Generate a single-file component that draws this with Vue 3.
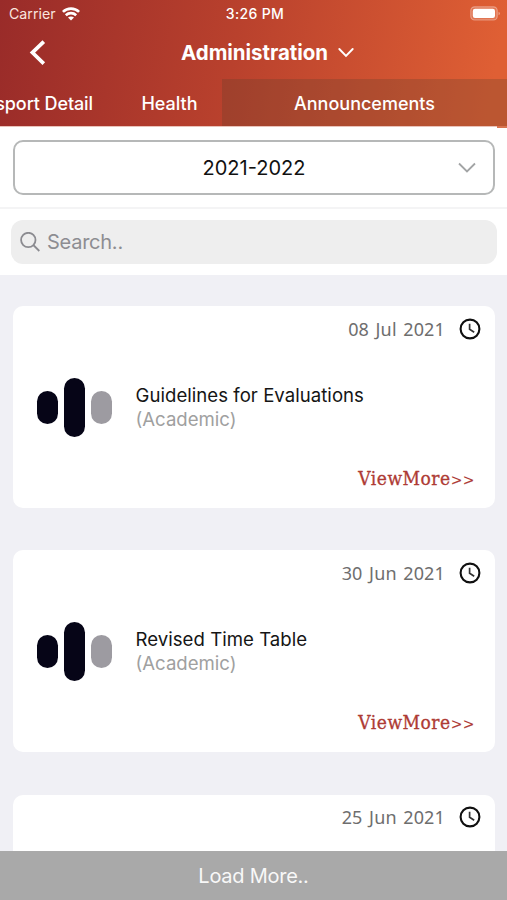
<script setup>
const announcements = [
  { date: '08 Jul 2021', title: 'Guidelines for Evaluations', category: '(Academic)' },
  { date: '30 Jun 2021', title: 'Revised Time Table', category: '(Academic)' },
  { date: '25 Jun 2021', title: '', category: '' },
]
</script>

<template>
  <div class="screen">
    <header class="header">
      <div class="status">
        <div class="carrier">
          <span>Carrier</span>
          <svg width="18" height="14" viewBox="0 0 18 14" fill="none" stroke="#fff" stroke-width="2.7">
            <path d="M.9 4.9C5.4.5 12.6.5 17.1 4.9" />
            <path d="M3.8 8.2C6.8 5.5 11.2 5.5 14.2 8.2" />
            <path d="M6 10.5C7.7 9.1 10.3 9.1 12 10.5L9 13.5Z" fill="#fff" stroke="none" />
          </svg>
        </div>
        <span class="clock">3:26 PM</span>
        <svg class="battery" width="31" height="15" viewBox="0 0 31 15">
          <rect x=".8" y=".8" width="26.4" height="13.2" rx="3.8" fill="#fff" fill-opacity=".15" stroke="#fff" stroke-opacity=".35" stroke-width="1.2" />
          <rect x="2.8" y="2.8" width="22.2" height="9.2" rx="2.2" fill="#fff" />
          <path d="M28.6 5.7c1.6.7 1.6 2.9 0 3.6z" fill="#fff" fill-opacity=".5" />
        </svg>
      </div>
      <div class="titlebar">
        <svg class="back" width="18" height="26" viewBox="0 0 18 26" fill="none" stroke="#fff" stroke-width="3.7">
          <path d="M15.8 1.6 4.4 12.6l11.4 11" />
        </svg>
        <h1>Administration</h1>
        <svg class="title-arrow" width="18" height="12" viewBox="0 0 18 12" fill="none" stroke="#fff" stroke-width="1.9" stroke-linecap="round">
          <path d="m2.3 2 6.7 7 6.7-7" />
        </svg>
      </div>
      <nav class="tabs">
        <div class="tab transport"><span>Transport Detail</span></div>
        <div class="tab health"><span>Health</span></div>
        <div class="tab active"><span>Announcements</span></div>
      </nav>
    </header>

    <section class="year">
      <div class="select">
        <span>2021-2022</span>
        <svg width="20" height="12" viewBox="0 0 20 12" fill="none" stroke="#a2a4a5" stroke-width="1.8">
          <path d="m2 1.5 8 8 8-8" />
        </svg>
      </div>
    </section>

    <section class="search">
      <div class="field">
        <svg width="21" height="21" viewBox="0 0 21 21" fill="none" stroke="#8b8b90" stroke-width="1.8">
          <circle cx="8.3" cy="8" r="7.2" />
          <path d="m13.3 13 6 6" />
        </svg>
        <span>Search..</span>
      </div>
    </section>

    <main class="list">
      <article v-for="item in announcements" :key="item.date" class="card">
        <div class="date">
          <span>{{ item.date }}</span>
          <svg width="22" height="22" viewBox="0 0 22 22" fill="none" stroke="#101010" stroke-width="2.1">
            <circle cx="11" cy="11" r="9.4" />
            <path d="M10.6 5.8v5.4l4.6 3" stroke="#333" stroke-width="1.7" />
          </svg>
        </div>
        <template v-if="item.title">
          <div class="content">
            <div class="bars"><i class="bar"></i><i class="bar tall"></i><i class="bar pale"></i></div>
            <div class="copy">
              <div class="name">{{ item.title }}</div>
              <div class="category">{{ item.category }}</div>
            </div>
          </div>
          <div class="more">ViewMore<span class="arrows">&gt;&gt;</span></div>
        </template>
      </article>
    </main>

    <footer class="load">Load More..</footer>
  </div>
</template>

<style>
html, body { margin: 0; overflow: hidden; }
</style>

<style scoped>
* { box-sizing: border-box; }
svg { display: block; flex: none; }
.screen {
  width: 507px;
  height: 900px;
  display: flex;
  flex-direction: column;
  overflow: hidden;
  background: #f0f0f5;
  font-family: Inter, "Liberation Sans", sans-serif;
  white-space: nowrap;
}
.header {
  flex: none;
  position: relative;
  height: 127px;
  color: #fff;
  background: linear-gradient(100deg, #992b29 0%, #b9412d 46%, #df5f34 96%);
  border-bottom: 1px solid #e9c3ba;
}
.header::after {
  content: "";
  position: absolute;
  right: 0;
  bottom: -2px;
  width: 10px;
  height: 2px;
  background: #d87350;
}
.status {
  height: 27px;
  display: grid;
  grid-template-columns: 1fr auto 1fr;
  align-items: center;
  padding: 0 6px 0 9px;
  font-size: 14.2px;
  color: #fae5df;
}
.carrier { display: flex; align-items: center; gap: 6px; }
.clock { font-weight: 500; font-size: 14px; letter-spacing: .35px; color: #fff; }
.battery { justify-self: end; }
.titlebar { height: 52px; display: flex; align-items: center; padding-left: 28px; }
h1 { margin: 0 0 0 135px; font-size: 20.5px; line-height: 26px; font-weight: 700; width: 147px; letter-spacing: -.05px; }
.title-arrow { margin-left: 9px; }
.tabs { height: 47px; display: grid; grid-template-columns: 117px 105px 1fr; overflow: hidden; }
.tab { display: flex; align-items: center; justify-content: center; font-size: 18px; font-weight: 500; padding-top: 2px; }
.transport { justify-content: flex-end; padding-right: 24px; letter-spacing: -.1px; }
.active { background: rgba(92, 62, 46, .27); }
.year { flex: none; height: 82px; padding: 13px 12px 0 13px; background: #fff; border-bottom: 2px solid #f4f4f5; }
.select {
  height: 55px;
  display: grid;
  grid-template-columns: 1fr auto 1fr;
  align-items: center;
  border: 2px solid #b6b8b8;
  border-radius: 10px;
  font-size: 20px;
  color: #111;
}
.select span { grid-column: 2; }
.select svg { justify-self: end; margin-right: 16px; }
.search { flex: none; height: 66px; padding: 11px 10px 0 11px; background: #fff; }
.field {
  height: 44px;
  display: flex;
  align-items: center;
  gap: 6px;
  padding-left: 9px;
  border-radius: 12px;
  background: #eee;
  font-size: 20px;
  letter-spacing: -.25px;
  color: #8d8d92;
}
.list { flex: 1; min-height: 0; padding: 31px 12px 0 13px; display: flex; flex-direction: column; gap: 42.4px; overflow: hidden; }
.card { flex: none; height: 202px; border-radius: 10px; background: #fff; overflow: hidden; }
.date {
  height: 44px;
  display: flex;
  align-items: center;
  justify-content: flex-end;
  gap: 14px;
  padding: 1px 14px 0 0;
  font-family: "Noto Sans", sans-serif;
  font-size: 18px;
  letter-spacing: .15px;
  word-spacing: 1.7px;
  color: #6e6e6e;
}
.content { height: 114px; display: flex; align-items: center; padding: 1px 0 0 24px; }
.bars { display: flex; align-items: center; gap: 6px; width: 98.5px; }
.bar { width: 21px; height: 33px; border-radius: 11px; background: #060517; }
.tall { height: 59px; }
.pale { background: #9d9ba1; }
.copy { font-size: 18.6px; line-height: 23.5px; color: #151515; }
.name { letter-spacing: .03px; }
.category { color: #a0a0a0; }
.more {
  height: 28px;
  line-height: 28px;
  padding-right: 20px;
  text-align: right;
  font-family: "DejaVu Serif Condensed", "DejaVu Serif", serif;
  font-stretch: condensed;
  font-size: 19px;
  letter-spacing: .5px;
  color: #ae3b35;
  -webkit-text-stroke: .3px #ae3b35;
}
.arrows { font-size: 15.5px; -webkit-text-stroke-width: .1px; }
.load {
  flex: none;
  height: 49px;
  display: flex;
  align-items: center;
  justify-content: center;
  padding-top: 1px;
  background: #a9a9a9;
  color: #f8f8f8;
  font-size: 20px;
  letter-spacing: -.25px;
}
</style>
